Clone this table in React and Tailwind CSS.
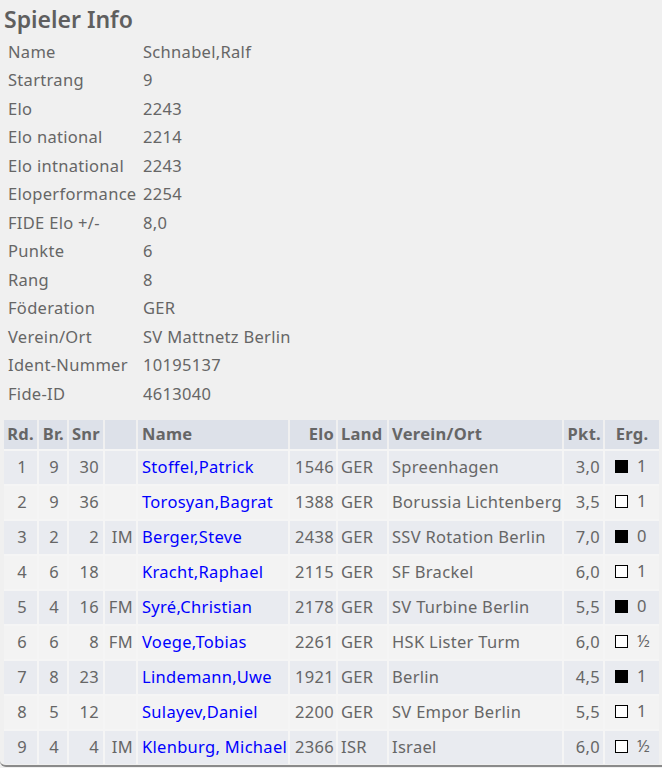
import React from "react";

const info = [
  ["Name", "Schnabel,Ralf"],
  ["Startrang", "9"],
  ["Elo", "2243"],
  ["Elo national", "2214"],
  ["Elo intnational", "2243"],
  ["Eloperformance", "2254"],
  ["FIDE Elo +/-", "8,0"],
  ["Punkte", "6"],
  ["Rang", "8"],
  ["Föderation", "GER"],
  ["Verein/Ort", "SV Mattnetz Berlin"],
  ["Ident-Nummer", "10195137"],
  ["Fide-ID", "4613040"],
];

const rows = [
  [1, 9, 30, "", "Stoffel,Patrick", 1546, "GER", "Spreenhagen", "3,0", "b", "1"],
  [2, 9, 36, "", "Torosyan,Bagrat", 1388, "GER", "Borussia Lichtenberg", "3,5", "w", "1"],
  [3, 2, 2, "IM", "Berger,Steve", 2438, "GER", "SSV Rotation Berlin", "7,0", "b", "0"],
  [4, 6, 18, "", "Kracht,Raphael", 2115, "GER", "SF Brackel", "6,0", "w", "1"],
  [5, 4, 16, "FM", "Syré,Christian", 2178, "GER", "SV Turbine Berlin", "5,5", "b", "0"],
  [6, 6, 8, "FM", "Voege,Tobias", 2261, "GER", "HSK Lister Turm", "6,0", "w", "½"],
  [7, 8, 23, "", "Lindemann,Uwe", 1921, "GER", "Berlin", "4,5", "b", "1"],
  [8, 5, 12, "", "Sulayev,Daniel", 2200, "GER", "SV Empor Berlin", "5,5", "w", "1"],
  [9, 4, 4, "IM", "Klenburg, Michael", 2366, "ISR", "Israel", "6,0", "w", "½"],
];

export default function App() {
  return (
    <div className="min-h-[768px] bg-[#f0f0f0] text-[#666666] font-['Noto_Sans',sans-serif] text-[16.5px] tracking-[0.3px]">
      <div className="border-b-2 border-[#8a8a8a] rounded-bl-[6px] pb-[1px]">
        <h1 className="pl-[4px] pt-[3px] text-[23px] font-semibold leading-[32px] tracking-[0px] text-[#5f5f5f]">Spieler Info</h1>
        <div className="pl-[8px] pt-[3px]">
          {info.map(([k, v]) => (
            <div key={k} className="flex h-[28.5px] items-center">
              <div className="w-[135px] whitespace-nowrap">{k}</div>
              <div>{v}</div>
            </div>
          ))}
        </div>
        <table className="mt-[11px] ml-[4px] w-[655px] border-separate border-spacing-0">
          <thead>
            <tr className="bg-[#dde1e9] h-[29px] font-bold text-[#666666]">
              <th className="w-[35px] text-right pr-[3px] border-r-2 border-[#f0f0f0]">Rd.</th>
              <th className="w-[30px] text-right pr-[3px] border-r-2 border-[#f0f0f0]">Br.</th>
              <th className="w-[36px] text-right pr-[3px] border-r-2 border-[#f0f0f0]">Snr</th>
              <th className="w-[33px] border-r-2 border-[#f0f0f0]"></th>
              <th className="w-[152px] text-left pl-[4px] border-r-2 border-[#f0f0f0]">Name</th>
              <th className="w-[48px] text-right pr-[2px] border-r-2 border-[#f0f0f0]">Elo</th>
              <th className="w-[51px] text-left pl-[3px] border-r-2 border-[#f0f0f0]">Land</th>
              <th className="w-[170px] text-left pl-[3px] border-r-2 border-[#f0f0f0]">Verein/Ort</th>
              <th className="w-[41px] text-right pr-[2px] border-r-2 border-[#f0f0f0]">Pkt.</th>
              <th className="text-center">Erg.</th>
            </tr>
          </thead>
          <tbody>
            {rows.map((r, i) => (
              <tr key={i} className={`h-[35px] ${i % 2 === 0 ? "bg-[#e9ebf0]" : "bg-[#f3f3f3]"}`}>
                <td className="text-right pr-[10px] border-r-2 border-t-2 border-[#f5f5f5]">{r[0]}</td>
                <td className="text-right pr-[8px] border-r-2 border-t-2 border-[#f5f5f5]">{r[1]}</td>
                <td className="text-right pr-[4px] border-r-2 border-t-2 border-[#f5f5f5]">{r[2]}</td>
                <td className="text-right pr-[3px] border-r-2 border-t-2 border-[#f5f5f5]">{r[3]}</td>
                <td className="text-left pl-[4px] whitespace-nowrap border-r-2 border-t-2 border-[#f5f5f5] text-[#0000ff]">{r[4]}</td>
                <td className="text-right pr-[2px] border-r-2 border-t-2 border-[#f5f5f5]">{r[5]}</td>
                <td className="text-left pl-[3px] border-r-2 border-t-2 border-[#f5f5f5]">{r[6]}</td>
                <td className="text-left pl-[3px] whitespace-nowrap border-r-2 border-t-2 border-[#f5f5f5]">{r[7]}</td>
                <td className="text-right pr-[3px] border-r-2 border-t-2 border-[#f5f5f5]">{r[8]}</td>
                <td className="pl-[10px] border-t-2 border-[#f5f5f5]">
                  <span className="inline-flex items-center gap-[9px]">
                    <span className={`inline-block w-[13px] h-[13px] border border-black ${r[9] === "b" ? "bg-black" : "bg-white"}`}></span>
                    <span>{r[10]}</span>
                  </span>
                </td>
              </tr>
            ))}
          </tbody>
        </table>
      </div>
    </div>
  );
}
